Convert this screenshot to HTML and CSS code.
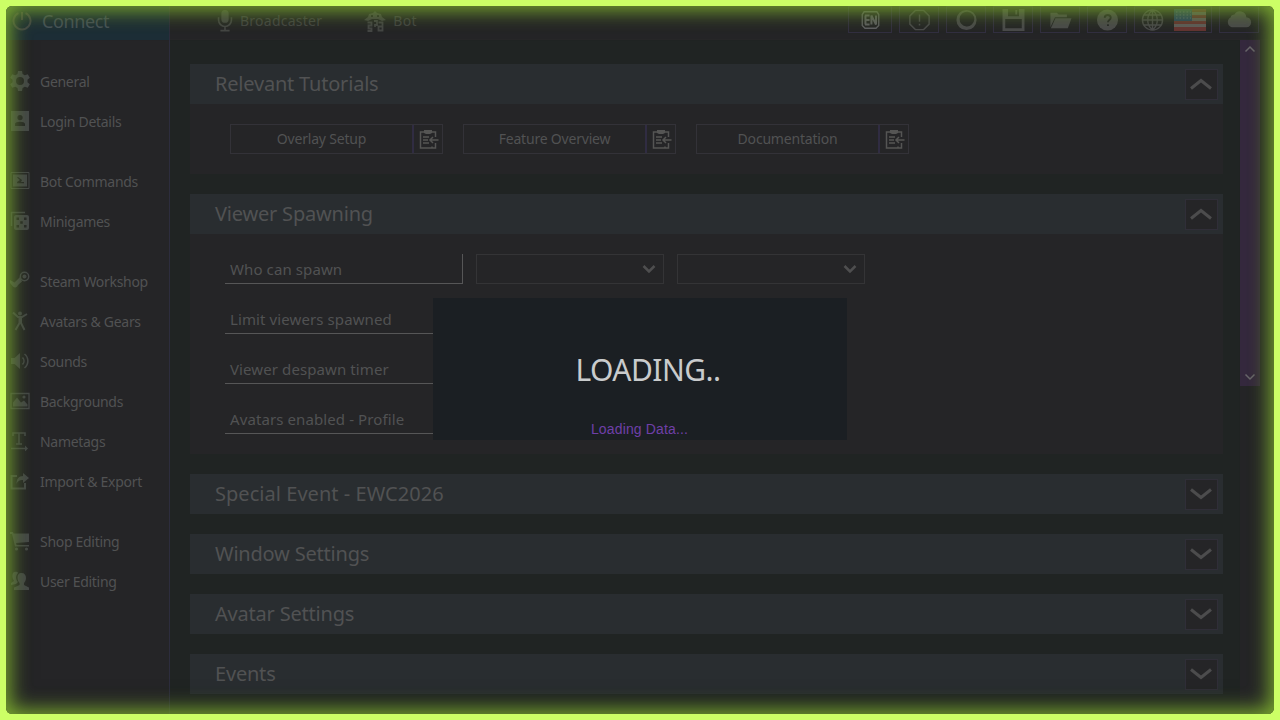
FILE: index.html
```
<!DOCTYPE html>
<html lang="en">
<head>
  <meta charset="UTF-8">
  <meta name="viewport" content="width=device-width, initial-scale=1.0">
  <title>Settings</title>
  <link rel="stylesheet" href="styles.css">
</head>
<body>

  <div class="app">
    <!-- sidebar -->
    <nav class="sidebar">
      <div class="connect">
        <svg class="icon" viewBox="0 0 20 20"><path d="M6.500 2.200a8.500 8.500 0 1 0 7 0M10 1v8" fill="none" stroke="currentColor" stroke-width="2"/></svg>
        <span>Connect</span>
      </div>
      <ul class="menu">
        <li><svg class="icon" viewBox="0 0 20 20"><path fill-rule="evenodd" d="M8 0h4l.6 3 2.2 1.200 3-1 2 3.500-2.300 2v2.600l2.300 2-2 3.500-3-1-2.200 1.200L12 20H8l-.6-3-2.200-1.200-3 1-2-3.500 2.300-2V8.700l-2.300-2 2-3.500 3 1L7.400 3zM10 6a4 4 0 1 0 0 8 4 4 0 0 0 0-8z"/></svg>General</li>
        <li><svg class="icon" viewBox="0 0 20 20"><path fill-rule="evenodd" d="M1 0h18v20H1zM10 4a2.600 2.600 0 1 0 0 5.200A2.600 2.600 0 0 0 10 4zM5 15h10v-2c0-3-10-3-10 0z"/></svg>Login Details</li>
      </ul>
      <ul class="menu">
        <li><svg class="icon" viewBox="0 0 20 20"><path d="M1 1.500h18v16H1z" fill="none" stroke="currentColor"/><path fill-rule="evenodd" d="M3 3.500h14v12H3zM7 6.500l3 2.500-3 2v1.200h7V11h-3l1-2-4-3z"/></svg>Bot Commands</li>
        <li><svg class="icon" viewBox="0 0 20 20"><path d="M1.500 15V1.500H15" fill="none" stroke="currentColor" stroke-width="1.500"/><path fill-rule="evenodd" d="M6 4h11a2 2 0 0 1 2 2v11a2 2 0 0 1-2 2H6a2 2 0 0 1-2-2V6a2 2 0 0 1 2-2zm.5 2.500v2.500H9V6.500zm7.500 0v2.500h2.500V6.500zm-3.800 3.800v2.500h2.500v-2.500zM6.500 14v2.500H9V14zm7.500 0v2.500h2.500V14z"/></svg>Minigames</li>
      </ul>
      <ul class="menu">
        <li><svg class="icon" viewBox="0 0 20 20"><circle cx="14.500" cy="5.500" r="4.200" fill="none" stroke="currentColor" stroke-width="1.500"/><circle cx="14.500" cy="5.500" r="2"/><path d="M10 6l2 4.500-4 3.500a3 3 0 0 1-5.500 1L0 12V9l4.500 2.500z"/></svg>Steam Workshop</li>
        <li><svg class="icon" viewBox="0 0 20 20"><circle cx="10" cy="2.500" r="2"/><path d="M3 1.500l5 4.500h4l5-3M9.500 6v6L5.500 19M11 6v6l3.500 7" fill="none" stroke="currentColor" stroke-width="2"/></svg>Avatars &amp; Gears</li>
        <li><svg class="icon" viewBox="0 0 20 20"><path d="M1 7h3.500L10 2v16l-5.500-5H1z"/><path d="M12.500 6.500a5 5 0 0 1 0 7M14.500 3a9 9 0 0 1 0 14" fill="none" stroke="currentColor" stroke-width="1.600"/></svg>Sounds</li>
        <li><svg class="icon" viewBox="0 0 20 20"><path d="M1 2.500h18v15H1z" fill="none" stroke="currentColor" stroke-width="1.300"/><path d="M3 15.500v-4l4-5 4 5 3-2 3.500 4v2z"/><circle cx="14" cy="6" r="1.600"/></svg>Backgrounds</li>
        <li><svg class="icon" viewBox="0 0 20 20"><path d="M3 5V2h12v3M9 2v11M6 13h6M1 17.500h15" fill="none" stroke="currentColor" stroke-width="1.600"/><path d="M15 14.500l3 3-3 3z"/></svg>Nametags</li>
        <li><svg class="icon" viewBox="0 0 20 20"><path d="M7 5H1.500v12.500H15V12" fill="none" stroke="currentColor" stroke-width="2"/><path d="M13 2l6 5-6 5V9c-4 0-5 1-6.500 4C6.500 8 8.500 5 13 5z"/></svg>Import &amp; Export</li>
      </ul>
      <ul class="menu">
        <li><svg class="icon" viewBox="0 0 20 20"><path d="M0 1h3l.5 1.500H19V11l-13 1 .5 2H19v1.500H5L2 3H0z"/><circle cx="6.500" cy="18" r="1.600"/><circle cx="16.500" cy="18" r="1.600"/></svg>Shop Editing</li>
        <li><svg class="icon" viewBox="0 0 20 20"><path d="M3 2c2-2 5-1 5 0-3 3-2 7 0 9l-2 2-5 1v-2l3-2C2 7 2 4 3 2z"/><path d="M11.500 2c3 0 4.500 2 4.500 5 0 2-1 4-2 5v2l5 2.500V19H4v-2.500L9.500 14v-2c-1-1-2-3-2-5 0-3 1-5 4-5z"/></svg>User Editing</li>
      </ul>
    </nav>

    <div class="content">
      <!-- top bar -->
      <header class="topbar">
        <div class="tab">
          <svg class="tab-icon" viewBox="0 0 20 24"><rect x="6" y="0" width="8" height="14" rx="4"/><path d="M3 8v3a7 7 0 0 0 14 0V8M10 18v4M5 22.500h10" fill="none" stroke="currentColor" stroke-width="1.800"/></svg>
          Broadcaster
        </div>
        <div class="tab">
          <svg class="tab-icon bot" viewBox="0 0 22 22"><path fill-rule="evenodd" d="M0 10l4-3 1-3 4-1 2-2 2 2 4 1 1 3 4 3-4 1-4-2H8l-4 2zM7 5v2h2V5zm6 0v2h2V5z"/><path d="M3.500 12.500h4v3h-3v3h3v2.500h-4M10 11h3v4h-2v2M14.500 12.500h4v8h-4v-4h4" fill="none" stroke="currentColor" stroke-width="1.800"/></svg>
          Bot
        </div>
        <div class="tools">
          <div class="tool wide">
            <svg viewBox="0 0 24 24"><path d="M5 3h14l2 3v12l-3 3H6l-3-3V6z" fill="none" stroke="currentColor" stroke-width="1.500"/><path d="M6 7h5M6 12h5M6 17h5M6.500 7v10M13 17V7l5 10V7" fill="none" stroke="currentColor" stroke-width="2.200"/></svg>
          </div>
          <div class="tool">
            <svg viewBox="0 0 24 24"><path d="M7.500 1.500h9l6 6v9l-6 6h-9l-6-6v-9z" fill="none" stroke="currentColor" stroke-width="1.600"/><path d="M12 6v8M12 16v2" stroke="currentColor" stroke-width="1.600"/></svg>
          </div>
          <div class="tool">
            <svg viewBox="0 0 24 24"><path fill-rule="evenodd" d="M12 1a11 11 0 1 0 0 22 11 11 0 0 0 0-22zm1 2a8 8 0 1 1-1 16 8 8 0 0 1 1-16z"/></svg>
          </div>
          <div class="tool">
            <svg viewBox="0 0 24 24"><path fill-rule="evenodd" d="M0 0h24v24H0zM3 11v10h18V11zM6 0v8h12V0zm8 1h2v5h-2z"/></svg>
          </div>
          <div class="tool">
            <svg viewBox="0 0 24 24"><path d="M1 20V4h7l2 2h9v3H6z"/><path d="M6.500 10H24l-4 11H1.500z"/></svg>
          </div>
          <div class="tool">
            <svg viewBox="0 0 24 24"><circle cx="12" cy="12" r="11.500"/><path class="cut" d="M9 9.500c0-4 6.500-4 6.500 0 0 2.500-3 2.500-3 5M12.500 16.500v2"/></svg>
          </div>
          <div class="tool lang">
            <svg viewBox="0 0 24 24"><path d="M12 1a11 11 0 1 0 0 22 11 11 0 0 0 0-22zm0 0c-7 6-7 16 0 22M12 1c7 6 7 16 0 22M12 1v22M1 12h22M3 6.500h18M3 17.500h18" fill="none" stroke="currentColor" stroke-width="1.500"/></svg>
            <svg class="flag" viewBox="0 0 32 22"><path class="flag-white" d="M0 0h32v22H0z"/><path class="flag-red" d="M0 0h32v3H0zM0 6h32v3H0zM0 12h32v3H0zM0 18h32v4H0z"/><path class="flag-blue" d="M0 0h18v12H0z"/><path class="flag-stars" d="M2 3h15M2 6h15M2 9h15"/></svg>
          </div>
          <div class="tool">
            <svg class="cloud" viewBox="0 0 28 24"><path d="M6 20a6 6 0 0 1-1-11c0-2 2-3 4-3a7 7 0 0 1 13 3c7 0 7 11 0 11z"/></svg>
          </div>
        </div>
      </header>

      <main class="main">
        <div class="panels">
          <section class="panel">
            <h2><span>Relevant Tutorials</span><button class="toggle"><svg viewBox="0 0 24 14"><path d="M2 11.500l10-8 10 8"/></svg></button></h2>
            <div class="panel-body tutorials">
              <div class="link"><span>Overlay Setup</span><i><svg viewBox="0 0 20 20"><path d="M13 17.500v1.500H1.500V3H5M13 3h3.500v5M16.500 14v5H12M4 8h6M4 11h5M4 14h6M19.500 11H11M14 8l-3 3 3 3"/><path class="clip" d="M5 1h8v3l-2 1H7L5 4z"/></svg></i></div>
              <div class="link"><span>Feature Overview</span><i><svg viewBox="0 0 20 20"><path d="M13 17.500v1.500H1.500V3H5M13 3h3.500v5M16.500 14v5H12M4 8h6M4 11h5M4 14h6M19.500 11H11M14 8l-3 3 3 3"/><path class="clip" d="M5 1h8v3l-2 1H7L5 4z"/></svg></i></div>
              <div class="link"><span>Documentation</span><i><svg viewBox="0 0 20 20"><path d="M13 17.500v1.500H1.500V3H5M13 3h3.500v5M16.500 14v5H12M4 8h6M4 11h5M4 14h6M19.500 11H11M14 8l-3 3 3 3"/><path class="clip" d="M5 1h8v3l-2 1H7L5 4z"/></svg></i></div>
            </div>
          </section>

          <section class="panel">
            <h2><span>Viewer Spawning</span><button class="toggle"><svg viewBox="0 0 24 14"><path d="M2 11.500l10-8 10 8"/></svg></button></h2>
            <div class="panel-body spawning">
              <div class="row">
                <label class="first">Who can spawn</label>
                <div class="select"><svg viewBox="0 0 14 10"><path d="M1.500 2L7 7.500 12.500 2"/></svg></div>
                <div class="select"><svg viewBox="0 0 14 10"><path d="M1.500 2L7 7.500 12.500 2"/></svg></div>
              </div>
              <div class="row"><label>Limit viewers spawned</label></div>
              <div class="row"><label>Viewer despawn timer</label></div>
              <div class="row"><label>Avatars enabled - Profile</label></div>
            </div>
          </section>

          <section class="panel">
            <h2><span class="event">Special Event - EWC2026</span><button class="toggle"><svg viewBox="0 0 24 14"><path d="M2 2.500l10 8 10-8"/></svg></button></h2>
          </section>
          <section class="panel">
            <h2><span>Window Settings</span><button class="toggle"><svg viewBox="0 0 24 14"><path d="M2 2.500l10 8 10-8"/></svg></button></h2>
          </section>
          <section class="panel">
            <h2><span>Avatar Settings</span><button class="toggle"><svg viewBox="0 0 24 14"><path d="M2 2.500l10 8 10-8"/></svg></button></h2>
          </section>
          <section class="panel">
            <h2><span>Events</span><button class="toggle"><svg viewBox="0 0 24 14"><path d="M2 2.500l10 8 10-8"/></svg></button></h2>
          </section>
        </div>

        <div class="scrollbar">
          <div class="thumb">
            <svg viewBox="0 0 12 8"><path d="M1.500 6.500L6 2l4.500 4.500"/></svg>
            <svg viewBox="0 0 12 8"><path d="M1.500 1.500L6 6l4.500-4.500"/></svg>
          </div>
        </div>
      </main>
    </div>
  </div>

  <!-- loading dialog -->
  <div class="loading">
    <div class="loading-title">LOADING..</div>
    <div class="loading-text">Loading Data...</div>
  </div>

  <!-- glowing frame over the whole window -->
  <div class="frame"></div>

</body>
</html>
```
FILE: styles.css
```
* {
  box-sizing: border-box;
}

body {
  margin: 0;
  width: 1280px;
  height: 720px;
  overflow: hidden;
  position: relative;
  background-color: #252527;
  color: #515253;
  font-family: "Noto Sans", sans-serif;
  font-size: 14px;
}

svg {
  display: block;
  fill: currentColor;
}

.app {
  display: flex;
  height: 720px;
}

/* sidebar */
.sidebar {
  width: 170px;
  flex-shrink: 0;
  border-right: 1px solid #2d2d3d;
  background-color: #252527;
}

.connect {
  display: flex;
  align-items: center;
  gap: 10px;
  height: 40px;
  margin-bottom: 21px;
  padding: 2px 0 0 12px;
  background-color: #1d2e37;
  color: #47535a;
  font-size: 18px;
  letter-spacing: -0.4px;
}

.icon {
  width: 20px;
  height: 20px;
  color: #454849;
}

.menu {
  list-style: none;
  margin: 0 0 20px;
  padding: 0;
}

.menu li {
  display: flex;
  align-items: center;
  gap: 9px;
  height: 40px;
  padding-left: 10px;
  letter-spacing: -0.3px;
}

.menu .icon {
  margin-right: 1px;
}

/* top bar */
.content {
  flex: 1;
}

.topbar {
  display: flex;
  align-items: center;
  height: 40px;
  padding: 0 21px 0 45px;
  border-bottom: 1px solid #272728;
  color: #454646;
}

.tab {
  display: flex;
  align-items: center;
  gap: 5px;
  margin-right: 42px;
  padding-top: 2px;
  letter-spacing: 0.25px;
}

.tab-icon {
  width: 20px;
  height: 22px;
}

.tab-icon.bot {
  width: 22px;
  margin-right: 2px;
}

.tools {
  display: flex;
  gap: 7px;
  margin-left: auto;
}

.tool {
  display: flex;
  align-items: center;
  justify-content: center;
  gap: 10px;
  width: 40px;
  height: 27px;
  border: 1px solid #332f42;
  color: #4b4b4d;
}

.tool svg {
  width: 23px;
  height: 22px;
}

.tool.wide {
  width: 44px;
  color: #606064;
}

.tool.lang {
  width: 78px;
}

.tool .flag {
  width: 32px;
}

.tool .cloud {
  width: 28px;
}

.cut {
  fill: none;
  stroke: #252527;
  stroke-width: 2;
}

.flag-white {
  fill: #605c5c;
}

.flag-red {
  fill: #663433;
}

.flag-blue {
  fill: #294660;
}

.flag-stars {
  stroke: #566677;
  stroke-dasharray: 1.5 2;
}

/* settings panels */
.main {
  display: flex;
  justify-content: space-between;
  height: 680px;
  padding: 24px 0 0 20px;
  background-color: #202423;
}

.panels {
  width: 1033px;
}

.panel {
  margin-bottom: 20px;
  background-color: #252527;
}

.panel h2 {
  display: flex;
  align-items: center;
  justify-content: space-between;
  height: 40px;
  margin: 0;
  padding: 0 5px 0 25px;
  background-color: #292d30;
  font-size: 20px;
  font-weight: normal;
}

.panel h2 span {
  padding-bottom: 2px;
  letter-spacing: -0.2px;
}

.panel h2 .event {
  letter-spacing: 0.04px;
}

.toggle {
  display: flex;
  align-items: center;
  justify-content: center;
  width: 33px;
  height: 31px;
  padding: 0 1px 0 0;
  border: 1px solid #302e38;
  background-color: #252527;
  color: #4c4c4d;
}

.toggle svg {
  width: 24px;
  height: 14px;
  fill: none;
  stroke: currentColor;
  stroke-width: 3;
}

.tutorials {
  display: flex;
  gap: 20px;
  height: 70px;
  padding: 20px 40px;
}

.link {
  display: flex;
  width: 213px;
  height: 30px;
  border: 1px solid #333238;
  line-height: 28px;
  letter-spacing: -0.2px;
}

.link span {
  flex: 1;
  text-align: center;
}

.link i {
  display: flex;
  align-items: center;
  justify-content: center;
  width: 30px;
  padding-left: 1px;
  border-left: 2px solid #302c42;
}

.link svg {
  width: 20px;
  height: 20px;
  fill: none;
  stroke: #555554;
  stroke-width: 1.5;
}

.link .clip {
  fill: #555554;
  stroke: none;
}

.spawning {
  display: flex;
  flex-direction: column;
  gap: 20px;
  height: 220px;
  padding: 20px 35px;
}

.row {
  display: flex;
  height: 30px;
}

.row label {
  width: 238px;
  padding-left: 5px;
  border-bottom: 1px solid #565657;
  font-size: 15px;
  line-height: 30px;
  letter-spacing: 0.1px;
}

.row .first {
  border-right: 1px solid #565657;
}

.select {
  display: flex;
  align-items: center;
  justify-content: flex-end;
  width: 188px;
  margin-left: 13px;
  padding-right: 7px;
  border: 1px solid #343436;
}

.select svg {
  width: 14px;
  height: 10px;
  fill: none;
  stroke: #4e4e4f;
  stroke-width: 2.5;
}

/* scrollbar */
.scrollbar {
  width: 40px;
  margin-top: -24px;
  background-color: #252527;
}

.thumb {
  display: flex;
  flex-direction: column;
  align-items: center;
  justify-content: space-between;
  width: 20px;
  height: 346px;
  padding: 5px 0;
  background-color: #35293e;
}

.thumb svg {
  width: 12px;
  height: 8px;
  fill: none;
  stroke: #6a676c;
  stroke-width: 1.5;
}

/* loading dialog */
.loading {
  position: absolute;
  left: 433px;
  top: 298px;
  width: 414px;
  height: 142px;
  background-color: #1b1f23;
  text-align: center;
}

.loading-title {
  padding: 52px 0 0 16px;
  color: #c9cbcc;
  font-size: 30px;
  line-height: 39px;
  letter-spacing: -0.55px;
}

.loading-text {
  margin-top: 31px;
  padding-right: 1px;
  color: #6f3fa8;
  font-family: "Liberation Sans", sans-serif;
  font-size: 14px;
  line-height: 18px;
  letter-spacing: 0.15px;
}

/* green frame, the first shadow is the solid edge, the others are the glow */
.frame {
  position: absolute;
  inset: 6px;
  border-radius: 6px;
  box-shadow:
    0 0 0 12px #ccff66,
    inset 0 0 20px 4px rgba(140, 195, 50, 0.85),
    inset 0 0 22px 8px rgba(32, 38, 30, 0.5);
  pointer-events: none;
}
```
